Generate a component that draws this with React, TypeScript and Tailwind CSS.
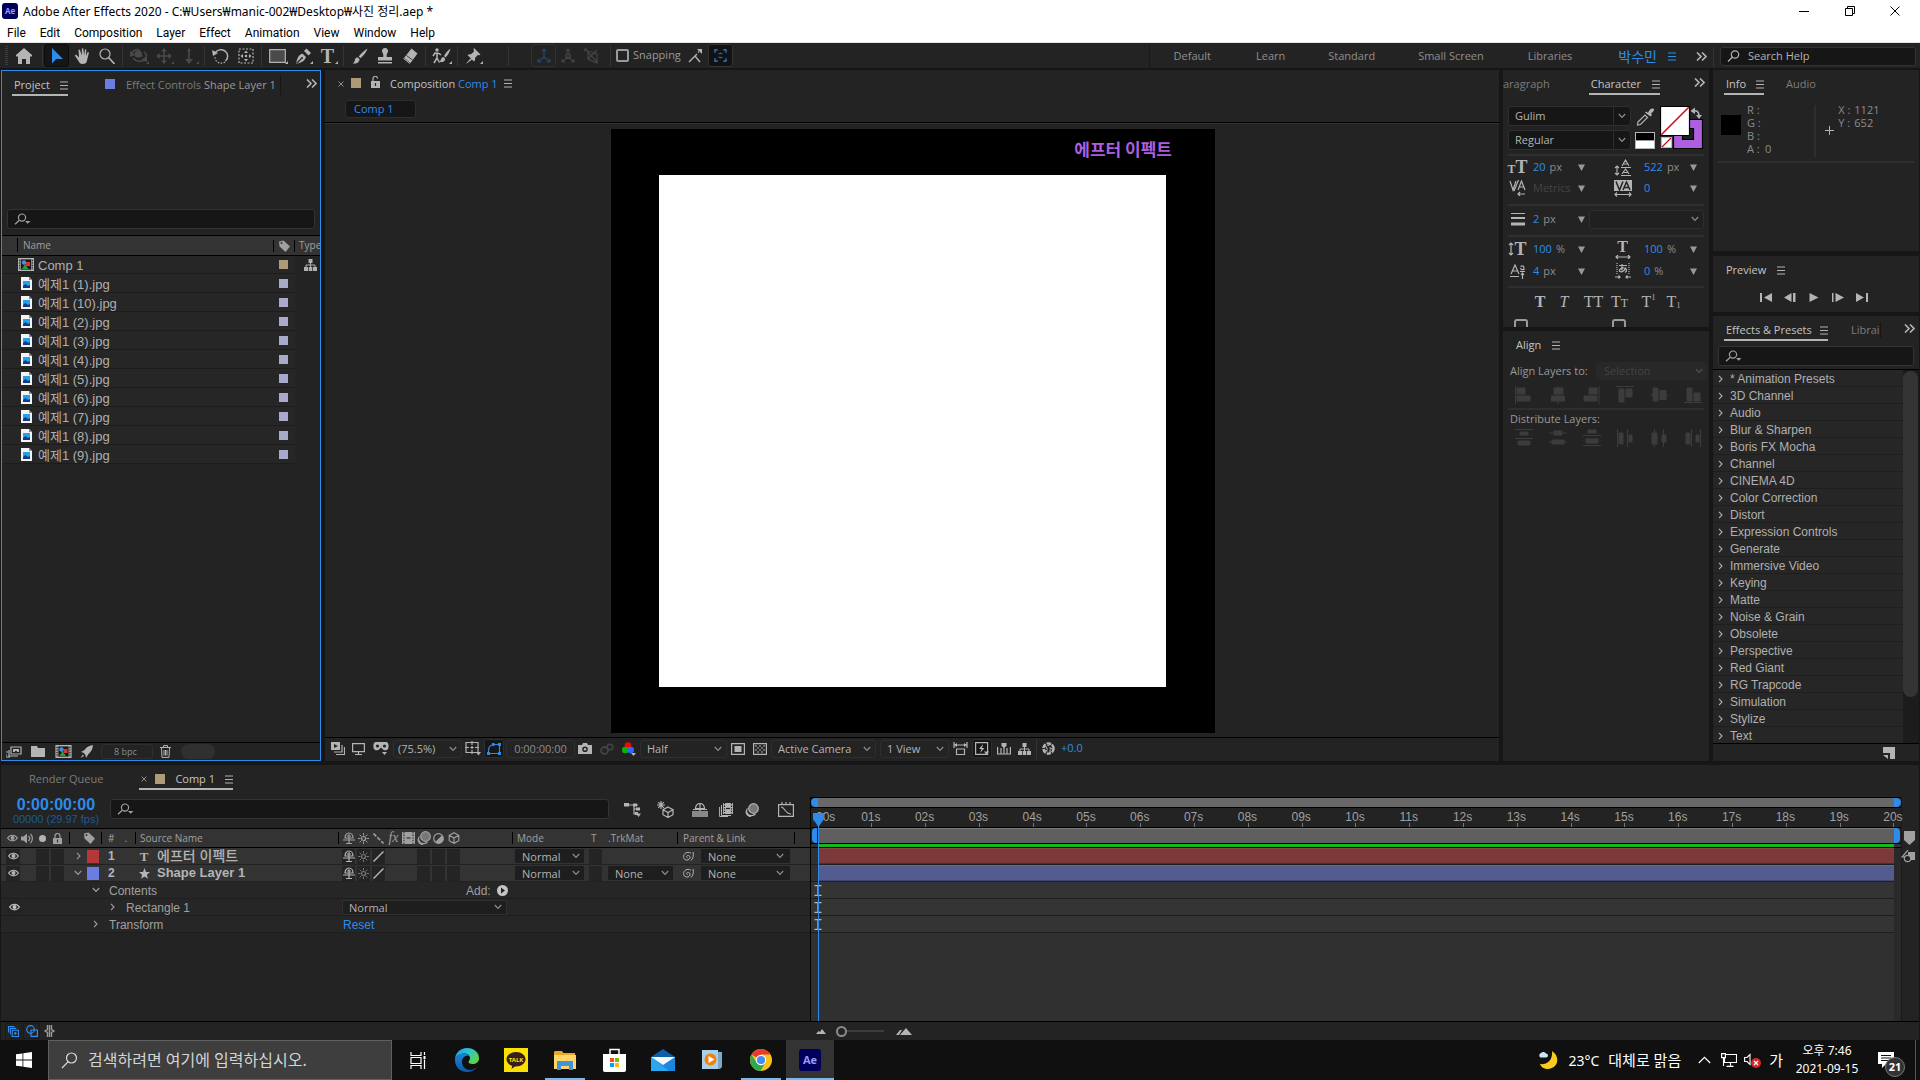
import React, { type ReactNode } from "react";

const UI = "font-['Open_Sans','Noto_Sans_CJK_KR',sans-serif]";
const LIST = "font-['Liberation_Sans','Noto_Sans_CJK_KR',sans-serif]";

type IcoProps = { w?: number; h?: number; vb?: string; className?: string; children: ReactNode };
const Ico = ({ w = 16, h = 16, vb = "0 0 16 16", className = "", children }: IcoProps) => (
  <svg width={w} height={h} viewBox={vb} className={`shrink-0 ${className}`} fill="none" stroke="currentColor" strokeWidth="1.2" aria-hidden="true">
    {children}
  </svg>
);
const solid = { fill: "currentColor", stroke: "none" };

const Btn = ({ label, className = "", children }: { label: string; className?: string; children: ReactNode }) => (
  <button type="button" aria-label={label} className={`flex shrink-0 items-center justify-center ${className}`}>{children}</button>
);

const Ham = ({ className = "text-[#b4b4b4]" }: { className?: string }) => (
  <Btn label="Panel menu" className={className}>
    <Ico w={8} h={9} vb="0 0 8 9"><path d="M0 1h8M0 4.5h8M0 8h8" strokeWidth="1" /></Ico>
  </Btn>
);
const More = () => (
  <Btn label="More" className="text-[#b4b4b4]">
    <Ico w={11} h={9} vb="0 0 11 9"><path d="M1 .5l4 4-4 4M6 .5l4 4-4 4" strokeWidth="1.6" /></Ico>
  </Btn>
);
const Chev = ({ className = "" }: { className?: string }) => (
  <Ico w={8} h={6} vb="0 0 8 6" className={className}><path d="M.8 1L4 4.4 7.2 1" strokeWidth="1.2" /></Ico>
);
const ChevR = () => (
  <Ico w={5} h={8} vb="0 0 5 8"><path d="M1 .8L4 4 1 7.2" strokeWidth="1.1" /></Ico>
);
const Tri = ({ label }: { label: string }) => (
  <Btn label={label} className="text-[#999]"><Ico w={7} h={7} vb="0 0 7 7"><path d="M0 .5h7L3.5 7z" {...solid} /></Ico></Btn>
);
const Lens = () => (
  <Ico w={17} h={12} vb="0 0 17 12" className="text-[#a0a0a0]">
    <circle cx="8" cy="4.6" r="3.6" /><path d="M5.3 7.2L1 11.2" /><path d="M11 8h5.4l-2.7 2.8z" {...solid} />
  </Ico>
);

const Sel = ({ label, value, className = "", sel = "pl-2", chev = "mr-2" }: { label: string; value: string; className?: string; sel?: string; chev?: string }) => (
  <div className={`grid shrink-0 grid-rows-[minmax(0,1fr)] items-center ${className}`}>
    <select aria-label={label} className={`h-full w-full appearance-none bg-transparent [grid-area:1/1] ${sel}`}>
      <option>{value}</option>
    </select>
    <Chev className={`pointer-events-none justify-self-end text-[#8c8c8c] [grid-area:1/1] ${chev}`} />
  </div>
);

const Search = ({ label, className = "" }: { label: string; className?: string }) => (
  <label className={`flex h-5 items-center gap-2 rounded-[3px] border border-[#333] bg-[#161616] px-1.5 ${className}`}>
    <Lens />
    <input aria-label={label} className="min-w-0 flex-1 bg-transparent text-[11px] text-[#b4b4b4] outline-none" />
  </label>
);

const AeLogo = ({ size, className = "" }: { size: string; className?: string }) => (
  <span className={`flex shrink-0 items-center justify-center rounded-[3px] bg-[#00005b] font-['Open_Sans',sans-serif] font-bold text-[#9999ff] ${size} ${className}`}>Ae</span>
);

/* ---------- window title and menus ---------- */
const TitleBar = () => (
  <header className="flex h-[22px] shrink-0 items-center bg-white pr-0.5 pl-0.5 text-black">
    <AeLogo size="size-4 text-[8px]" />
    <h1 className="ml-[5px] flex-1 pt-0.5 font-['Noto_Sans','Noto_Sans_CJK_KR',sans-serif] text-[12px] font-normal">
      Adobe After Effects 2020 - C:₩Users₩manic-002₩Desktop₩사진 정리.aep *
    </h1>
    <Btn label="Minimize" className="w-[46px]"><Ico w={10} h={10} vb="0 0 10 10"><path d="M0 5.5h10" strokeWidth="1" /></Ico></Btn>
    <Btn label="Restore" className="w-[45px]">
      <Ico w={10} h={10} vb="0 0 10 10"><path d="M.5 2.5h7v7h-7zM2.5 2.5v-2h7v7h-2" strokeWidth="1" /></Ico>
    </Btn>
    <Btn label="Close" className="w-[46px]"><Ico w={10} h={10} vb="0 0 10 10"><path d="M.5.5l9 9M9.5.5l-9 9" strokeWidth="1" /></Ico></Btn>
  </header>
);

const MenuBar = () => (
  <nav className="flex h-[21px] shrink-0 items-center gap-[14px] border-b border-[#e4e4e4] bg-white pt-0.5 pl-[7px] font-[Roboto,sans-serif] text-[12px] text-black">
    {["File", "Edit", "Composition", "Layer", "Effect", "Animation", "View", "Window", "Help"].map((m) => (
      <button key={m} type="button">{m}</button>
    ))}
  </nav>
);

/* ---------- tool bar ---------- */
const Sep = ({ w = "w-[7px]" }: { w?: string }) => (
  <span className={`flex h-5 shrink-0 justify-center ${w}`}><span className="w-px bg-[#343434]" /></span>
);
const Tool = ({ label, className = "", w = "w-[25px]", corner = false, children }: { label: string; className?: string; w?: string; corner?: boolean; children: ReactNode }) => (
  <Btn label={label} className={`relative h-[23px] ${w} ${className}`}>
    {children}
    {corner && <Ico w={3} h={3} vb="0 0 3 3" className="absolute right-0.5 bottom-[3px]"><path d="M3 0v3H0z" {...solid} /></Ico>}
  </Btn>
);
const axis = <path d="M8 9V1M6 3l2-2 2 2M8 9l-6 5M8 9l6 5M2 11v3h3M14 11v3h-3" />;

const ToolBar = () => (
  <div className={`flex h-[25px] shrink-0 items-center bg-[#232323] text-[#b4b4b4] ${UI}`}>
    <span className="ml-[5px] h-5 w-[3px] bg-[repeating-linear-gradient(#3c3c3c_0_1px,transparent_1px_2px)]" />
    <Tool label="Home" w="w-8"><Ico w={18} h={16} vb="0 0 18 16"><path d="M9 0L1 7v1.500h2V16h4v-5h4v5h4V8.500h2V7z" {...solid} /></Ico></Tool>
    <Sep w="w-1" />
    <Tool label="Selection" className="rounded-[3px] border border-[#0c0c0c] bg-[#161616] text-[#2d8ceb]">
      <Ico><path d="M3 0v15.500l4.200-4.500L14 11z" {...solid} /></Ico>
    </Tool>
    <Tool label="Hand">
      <Ico><path d="M5 9.500L2 6.500 .8 7.600 4.500 13c.8 1.800 2 3 4 3 3 0 4.500-1.500 4.700-4.500L15 4.500l-1.300-.4-1.600 4L12.300 1.500 11 1.300l-.8 6L9.200.3 7.800.4l.1 7L5.800 1.500l-1.300.5z" {...solid} /></Ico>
    </Tool>
    <Tool label="Zoom"><Ico><circle cx="6" cy="6" r="5" /><path d="M9.500 9.500L15.500 16" strokeWidth="1.600" /></Ico></Tool>
    <Sep />
    <Tool label="Orbit camera" corner className="text-[#4a4a4a]">
      <Ico w={18} vb="0 0 18 16"><path d="M2 5.500C4 .5 9 .5 10.500 4L12 9M3 10c3 4 9 4 12 1.500M14 4c3 2 3 5 1 7" strokeWidth="1.400" /><circle cx="8" cy="6" r="3.600" {...solid} /><path d="M0 3l5 4-5 2zM11 12l6-4v6z" {...solid} /></Ico>
    </Tool>
    <Tool label="Pan camera" corner className="text-[#4a4a4a]">
      <Ico><path d="M8 2v12M2 8h12" strokeWidth="1.600" /><path d="M8 0l3 3.500H5zM8 16l3-3.500H5zM0 8l3.500-3v6zM16 8l-3.500-3v6z" {...solid} /></Ico>
    </Tool>
    <Tool label="Dolly camera" corner className="text-[#4a4a4a]">
      <Ico><path d="M8 2v10" strokeWidth="1.600" /><path d="M8 0l2 3H6zM8 16l4-5H4z" {...solid} /></Ico>
    </Tool>
    <Sep />
    <Tool label="Rotation">
      <Ico w={18} vb="0 0 18 16"><path d="M3 5C5 1.500 9.500.8 13 3c3.600 2.600 3.400 7.600.5 10" strokeWidth="1.500" /><path d="M0 2l1 6 5-3z" {...solid} /><path d="M13 14c-3 2-7 1.500-9-1.500-.8-1-1-2.500-1-3.500" strokeDasharray="1.500 1.500" /></Ico>
    </Tool>
    <Tool label="Pan behind">
      <Ico><path d="M1 1h14v14H1z" strokeDasharray="2 1.500" /><path d="M8 2.500l2 2.500H6zM8 13.500l2-2.500H6zM2.500 8L5 6v4zM13.500 8L11 6v4z" {...solid} /><circle cx="8" cy="8" r="1.200" {...solid} /></Ico>
    </Tool>
    <Sep />
    <Tool label="Rectangle" corner><Ico w={17} h={14} vb="0 0 17 14"><path d="M.7.7h15.600v12.600H.7z" fill="#4a4a4a" /></Ico></Tool>
    <Tool label="Pen" corner>
      <Ico><path d="M1 16C2 11 3 7 7.500 5.500l3.500 3.500C9.500 13.500 6 14.500 1 16z" {...solid} /><path d="M9 3l2.500-2.500L16 5l-2.500 2.500z" {...solid} /><path d="M1.500 15.500l5-5" stroke="#232323" /><circle cx="7" cy="10" r="1" fill="#232323" stroke="none" /></Ico>
    </Tool>
    <Tool label="Type" corner><span className="font-['Liberation_Serif',serif] text-[20px] leading-none font-bold">T</span></Tool>
    <Sep />
    <Tool label="Brush"><Ico><path d="M15.500.5C12 2.500 9 5.500 6.800 8.500l1.700 1.700C11.500 7.500 14.500 4 15.500.5zM6 9.500c-2.500-.5-3 1.500-3.200 3C2.500 14 1.500 15 .5 15.500c3 .5 7-.5 7-4.300z" {...solid} /></Ico></Tool>
    <Tool label="Clone stamp"><Ico><path d="M8 0a3 3 0 0 1 2.600 4.500C9.500 6 9.600 7.500 9.800 9H15v3.500H1V9h5.200c.2-1.500.3-3-.8-4.500A3 3 0 0 1 8 0zM1 14h14v1.500H1z" {...solid} /></Ico></Tool>
    <Tool label="Eraser"><Ico><path d="M9.500.5l6 5-7 9.500-6.500-5z" {...solid} /><path d="M1.500 10.500l6.500 5" strokeWidth="1" /><path d="M4.500 7.500l6 4.500" stroke="#232323" strokeWidth=".8" /></Ico></Tool>
    <Sep />
    <Tool label="Roto brush" corner>
      <Ico w={19} vb="0 0 19 16"><circle cx="5" cy="2" r="1.700" {...solid} /><path d="M1 8l2-3 4 .5L9 7M5 5v5l-3 5M5 10l2.500 4.500" strokeWidth="1.500" /><path d="M18.500.5c-3 2-5 5-6.500 7.500l1.500 1.500c2.500-2.500 4.500-6 5-9zM11.500 9c-2.500 0-2.500 3.500-4 5 3 .5 6-.5 5.500-3.500z" {...solid} /></Ico>
    </Tool>
    <Sep w="w-1.5" />
    <Tool label="Puppet pin" corner><Ico><path d="M9 0l6.500 6.500-1.200.8-1.500-.3-2.800 3c.3 1.500 0 2.700-1 3.500L2.500 7c1-.8 2-1 3.500-.8l3-2.700L8.500 1zM5.500 10.500L1 15.500l1-.2 5-3.800z" {...solid} /></Ico></Tool>
    <Sep w="w-[46px]" />
    <Tool label="Local axis" className="rounded-[3px] border border-[#303030] text-[#23496e]"><Ico>{axis}</Ico></Tool>
    <Tool label="World axis" w="w-6" className="text-[#444]"><Ico>{axis}<circle cx="8" cy="8" r="2.500" /></Ico></Tool>
    <Tool label="View axis" w="w-6" className="text-[#444]"><Ico><path d="M4 3v8l9 4V6zM1 1l12 13M13 2L4 11M0 4V1h3" /></Ico></Tool>
    <Sep w="w-3" />
    <label className="flex shrink-0 items-center gap-1 text-[11px] text-[#9a9a9a]">
      <input type="checkbox" className="size-[13px] appearance-none rounded-[2px] border-2 border-[#9a9a9a]" />
      Snapping
    </label>
    <Tool label="Snap to edges" className="ml-0.5"><Ico><path d="M2 14l6-6 5 6M8 8l2-2M11 4.500l1-1" strokeWidth="1.400" /><path d="M10 1h5v5z" {...solid} /></Ico></Tool>
    <Tool label="Snap to features" className="rounded-[3px] border border-[#333] bg-[#121212] text-[#2d8ceb]">
      <Ico w={13} h={13} vb="0 0 14 14"><path d="M1 4V1h3M10 1h3v3M13 10v3h-3M4 13H1v-3M5 5h1M8 5h1M5 9h1M8 9h1M7 4v1M7 9v1" /></Ico>
    </Tool>
    <span className="flex-1" />
    <nav className="flex shrink-0 items-center pt-0.5 text-[11px] text-[#8f8f8f]">
      <span className="mr-6 h-[23px] w-px bg-[#191919]" />
      <button type="button" className="mr-[45px]">Default</button>
      <button type="button" className="mr-[43px]">Learn</button>
      <button type="button" className="mr-[43px]">Standard</button>
      <button type="button" className="mr-[44px]">Small Screen</button>
      <button type="button" className="mr-[46px]">Libraries</button>
      <button type="button" className="mr-[11px] text-[14px] leading-5 text-[#2d8ceb]">박수민</button>
      <Ham className="mr-5 text-[#2d8ceb]" />
      <More />
      <Sep w="w-[13px]" />
    </nav>
    <label className="mt-px mr-1 flex h-[19px] w-[196px] shrink-0 items-center gap-2 rounded-[3px] border border-[#333] bg-[#161616] pl-1.5">
      <Ico w={13} h={12} vb="0 0 13 12"><circle cx="8" cy="4.500" r="3.700" /><path d="M5.500 7L1 11.500" /></Ico>
      <input aria-label="Search Help" placeholder="Search Help" className="min-w-0 flex-1 bg-transparent text-[11px] outline-none placeholder:text-[#b4b4b4]" />
    </label>
  </div>
);

/* ---------- project panel ---------- */
const Tab = ({ children, className = "" }: { children: ReactNode; className?: string }) => (
  <div className={`mt-1.5 flex h-[19px] items-center border-b-2 border-[#b4b4b4] pb-px pl-0.5 text-[#c4c4c4] ${className}`}>{children}</div>
);
const TabRow = ({ children, className = "" }: { children: ReactNode; className?: string }) => (
  <div className={`flex h-[30px] shrink-0 items-start text-[11px] ${className}`}>{children}</div>
);
const Off = ({ children, className = "" }: { children: ReactNode; className?: string }) => (
  <button type="button" className={`mt-1.5 h-4 shrink-0 leading-4 text-[#7c7c7c] ${className}`}>{children}</button>
);

const CompIcon = ({ w = 16 }: { w?: number }) => (
  <Ico w={w} h={13} vb="0 0 16 13"><path d="M.5.5h15v12H.5z" fill="#8c8c8c" stroke="#b4b4b4" /><path d="M3 1.500h10v10H3z" fill="#1a1a1a" stroke="none" /><path d="M1.500 2v9M14.500 2v9" stroke="#222" strokeDasharray="1 1.500" /><circle cx="6" cy="4.500" r="2.200" fill="#4a90e2" stroke="none" /><path d="M8 4h4v4H8z" fill="#d33" stroke="none" /><path d="M4 11l3-5 3.500 5z" fill="#23a03a" stroke="none" /></Ico>
);
const JpgIcon = () => (
  <Ico w={11} h={13} vb="0 0 11 13"><path d="M0 0h8l3 3v10H0z" fill="#f4f4f4" stroke="none" /><path d="M8 0v3h3z" fill="#888" stroke="none" /><path d="M2 4h7v7H2z" fill="#1fa2f0" stroke="none" /><path d="M2 9l2.500-2L7 9l2-1v3H2z" fill="#123a8a" stroke="none" /></Ico>
);
const Tag = () => (
  <Ico w={13} h={12} vb="0 0 13 12"><path d="M1 1.500L5.500.5 12 6.500 7.500 12 1.500 6.500z" {...solid} /><circle cx="3.500" cy="3" r="1" fill="#333" stroke="none" /></Ico>
);
const FlowIcon = ({ className = "" }: { className?: string }) => (
  <Ico w={13} h={12} vb="0 0 13 12" className={className}><path d="M4.500 0h4v4h-4zM0 8h4v4H0zM9 8h4v4H9zM4.700 8h3.600v4H4.700z" {...solid} /><path d="M6.500 4v4M2 8V6h9v2" strokeWidth="1" /></Ico>
);

const files = ["Comp 1", "예제1 (1).jpg", "예제1 (10).jpg", "예제1 (2).jpg", "예제1 (3).jpg", "예제1 (4).jpg", "예제1 (5).jpg", "예제1 (6).jpg", "예제1 (7).jpg", "예제1 (8).jpg", "예제1 (9).jpg"];

const ProjectPanel = () => (
  <section className="flex w-[320px] shrink-0 flex-col border border-[#2d8ceb] bg-[#232323]">
    <TabRow className="pl-2.5">
      <Tab className="w-14 justify-between">Project<Ham /></Tab>
      <span className="mt-2 ml-[37px] size-2.5 bg-[#6b7de0]" />
      <Off className="ml-[11px]">Effect Controls <span className="text-[#9a9a9a]">Shape Layer 1</span></Off>
      <span className="mt-1 ml-1 h-5 w-px bg-[#161616]" />
      <span className="mt-2 mr-[3px] ml-auto"><More /></span>
    </TabRow>
    <div className="h-[108px] shrink-0" />
    <Search label="Search project" className="mx-[5px] shrink-0" />
    <div className="mt-1.5 min-h-0 flex-1 overflow-hidden">
      <table className="w-full table-fixed border-collapse text-left">
        <thead>
          <tr className={`h-5 border-y border-black bg-[#333] text-[10px] text-[#a0a0a0] ${UI}`}>
            <th scope="col" className="pl-[15px] font-normal"><span className="border-l border-black pl-[5px]">Name</span></th>
            <th scope="col" aria-label="Label" className="w-[22px]"><span className="flex h-3 items-center border-x border-black pl-1"><Tag /></span></th>
            <th scope="col" className="w-[25px] pl-1 font-normal">Type</th>
          </tr>
        </thead>
        <tbody>
          {files.map((f, i) => (
            <tr key={f} className={`text-[13px] text-[#b0b0b0] ${LIST}`}>
              <td className="border-b border-[#1c1c1c] bg-[#262626] py-0 pl-4">
                <span className={i === 0 ? "flex h-[17px] items-center leading-none" : "flex h-[18px] items-center leading-none"}>
                  <span className="flex w-5 items-center">{i === 0 ? <CompIcon /> : <span className="ml-[3px]"><JpgIcon /></span>}</span>
                  <span className="pt-0.5">{f}</span>
                </span>
              </td>
              <td className="border-b border-[#1c1c1c] bg-[#262626] p-0 pl-1.5"><span className={i === 0 ? "block size-[9px] bg-[#ad9a78]" : "block size-[9px] bg-[#a9a9cc]"} /></td>
              <td className="p-0 pl-[9px]">{i === 0 && <FlowIcon />}</td>
            </tr>
          ))}
        </tbody>
      </table>
    </div>
    <div className="flex h-[18px] shrink-0 items-center border-t border-black pl-[3px] text-[#b4b4b4]">
      <Btn label="Interpret footage"><Ico w={17} h={12} vb="0 0 17 12"><path d="M6 1h10v7H6zM4 4v6h9M1 6h2M1 9h1M1 11h4M8 5.500h2M12 5.500h2" /><path d="M8 3h6v2H8z" {...solid} /></Ico></Btn>
      <Btn label="New folder" className="ml-[9px]"><Ico w={14} h={11} vb="0 0 14 11"><path d="M0 0h6l1 2h7v9H0z" {...solid} /></Ico></Btn>
      <Btn label="New composition" className="ml-2.5"><CompIcon w={17} /></Btn>
      <Btn label="Project settings" className="ml-2"><Ico w={13} h={13} vb="0 0 13 13"><path d="M13 0C9 .5 6 2.500 4.500 5L1 7l2.500.8L5.500 10l.5 3 2.500-4C11 7 12.800 4 13 0zM3 9.500L.5 13 4 11z" {...solid} /></Ico></Btn>
      <button type="button" className={`ml-2 h-[15px] w-[52px] rounded-[3px] border border-[#2e2e2e] pl-3 text-left text-[9px] leading-none text-[#8c8c8c] ${UI}`}>8 bpc</button>
      <Btn label="Delete" className="ml-[7px]"><Ico w={11} h={13} vb="0 0 11 13"><path d="M0 2.500h11M3.500 2V.6h4V2M1.500 3l.5 9.400h7L9.500 3M4 5v5.500M5.500 5v5.500M7 5v5.500" strokeWidth="1" /></Ico></Btn>
      <span className="ml-2.5 h-[15px] w-[34px] rounded-full bg-[#303030]" />
    </div>
  </section>
);

/* ---------- composition viewer ---------- */
const box = "rounded-[3px] border border-[#2e2e2e]";
const CompPanel = () => (
  <section className="ml-1 flex min-w-0 flex-1 flex-col bg-[#232323]">
    <TabRow className="pl-[13px] text-[#c4c4c4]">
      <Btn label="Close tab" className="mt-[11px] text-[#8c8c8c]"><Ico w={6} h={6} vb="0 0 6 6"><path d="M.5.5l5 5M5.500.5l-5 5" strokeWidth="1" /></Ico></Btn>
      <span className="mt-2 ml-[7px] size-2.5 bg-[#ad9a78]" />
      <Btn label="Lock" className="mt-1.5 ml-2.5 text-[#b4b4b4]"><Ico w={9} h={12} vb="0 0 9 12"><path d="M0 5h9v7H0z" {...solid} /><path d="M2 5V2.500a2 2 0 0 1 4.500 0" /><path d="M4.500 7v3" stroke="#232323" /></Ico></Btn>
      <span className="mt-1.5 ml-2.5 leading-4">Composition <span className="text-[#2d8ceb]">Comp 1</span></span>
      <span className="mt-[9px] ml-1.5"><Ham /></span>
    </TabRow>
    <div className="flex h-[22px] shrink-0 items-start pl-5 text-[11px]">
      <button type="button" className="h-[18px] w-[71px] rounded-[3px] border border-[#2e2e2e] bg-[#161616] pl-2 text-left leading-4 text-[#2d8ceb]">Comp 1</button>
    </div>
    <div className="flex min-h-0 flex-1 items-center justify-center border-t border-black pt-0.5 pl-0.5 shadow-[inset_0_1px_0_#333]">
      <div className="relative flex h-[604px] w-[604px] items-center justify-center bg-black">
        <div className="mr-px h-[512px] w-[507px] bg-white" />
        <span className="absolute top-2 right-[43px] font-['Noto_Sans_CJK_KR',sans-serif] text-[17px] leading-6 font-bold text-[#ad5fe0]">에프터 이펙트</span>
      </div>
    </div>
    <div className="flex h-6 shrink-0 items-center border-t border-black pb-0.5 pl-1.5 text-[11px] text-[#b4b4b4]">
      <Btn label="Always preview"><Ico w={14} h={13} vb="0 0 14 13"><path d="M0 0h9v8H0z" {...solid} /><path d="M3 2l4 2-4 2z" fill="#232323" stroke="none" /><path d="M11 3v7H3M13.500 5v7.500H5" /></Ico></Btn>
      <Btn label="Primary viewer" className="ml-[7px]"><Ico w={13} h={12} vb="0 0 13 12"><path d="M.6.6h11.800v8H.6zM6.500 9v2.500M3 11.500h7" /></Ico></Btn>
      <Btn label="3D goggles" className="ml-2"><Ico w={16} h={13} vb="0 0 16 13"><path d="M3 0h10c3 0 3 5 2 7-1 1.500-4 2-5.500 0L8 5.500 6.500 7C5 9 2 8.500 1 7 0 5 0 0 3 0z" {...solid} /><circle cx="4.500" cy="4" r="1.600" fill="#232323" stroke="none" /><circle cx="11.500" cy="4" r="1.600" fill="#232323" stroke="none" /><path d="M9 10h5l-2.500 3z" {...solid} /></Ico></Btn>
      <Sel label="Magnification" value="(75.5%)" className={`ml-1 h-[18px] w-[69px] ${box}`} sel="pl-1" chev="mr-1" />
      <Btn label="Grid options" className="ml-[3px]"><Ico w={16} h={15} vb="0 0 16 15"><path d="M1 1.500h12v10H1zM7 0v4M7 9v4M0 6.500h4M10 6.500h4M5.500 6.500h3M7 5v3" /><path d="M11 11h5l-2.500 3.500z" {...solid} /></Ico></Btn>
      <Btn label="Mask visibility" className="ml-[3px] h-[19px] w-5 rounded-[3px] border border-[#2e2e2e] bg-[#161616] text-[#2d8ceb]"><Ico w={14} h={12} vb="0 0 14 12"><path d="M1.500 10.500V7C1.500 4 4 1.500 7 1.500h5.500v9z" /><path d="M0 9h3v3H0zM11 9h3v3h-3zM11 0h3v3h-3zM5 0h2.500v3H5z" {...solid} /></Ico></Btn>
      <button type="button" className={`ml-0.5 h-[18px] w-[69px] leading-none text-[#8c8c8c] ${box}`}>0:00:00:00</button>
      <Btn label="Take snapshot" className="ml-[3px]"><Ico w={14} h={11} vb="0 0 14 11"><path d="M0 2h4l1-2h4l1 2h4v9H0z" {...solid} /><circle cx="7" cy="6.200" r="2.800" fill="#232323" stroke="none" /><circle cx="7" cy="6.200" r="1.200" {...solid} /></Ico></Btn>
      <Btn label="Show snapshot" className="ml-2 text-[#444]"><Ico w={14} h={12} vb="0 0 14 12"><circle cx="4.500" cy="7.500" r="3.500" strokeWidth="1.800" /><circle cx="10" cy="4" r="2.800" strokeWidth="1.600" /></Ico></Btn>
      <Btn label="Show channel" className="ml-2"><Ico w={15} h={14} vb="0 0 15 14"><circle cx="6" cy="3.500" r="3.300" fill="#f00" stroke="none" /><circle cx="3.300" cy="8" r="3.300" fill="#0b0" stroke="none" /><circle cx="8.700" cy="8" r="3.300" fill="#36f" stroke="none" /><path d="M9 11h5l-2.500 3z" {...solid} /></Ico></Btn>
      <Sel label="Resolution" value="Half" className={`ml-[3px] h-[18px] w-[87px] ${box}`} sel="pl-1.5" chev="mr-1" />
      <Btn label="Region of interest" className="ml-1"><Ico w={14} h={12} vb="0 0 14 12"><path d="M.6.6h12.800v10.800H.6z" /><path d="M3.500 3h7v6h-7z" {...solid} /></Ico></Btn>
      <Btn label="Transparency grid" className="ml-2"><Ico w={14} h={12} vb="0 0 14 12"><path d="M.6.6h12.800v10.800H.6zM2 3h2M6 3h2M10 3h2M4 5h2M8 5h2M2 7h2M6 7h2M10 7h2M4 9h2M8 9h2" /></Ico></Btn>
      <Sel label="3D view" value="Active Camera" className={`ml-1 h-[18px] w-[105px] ${box}`} sel="pl-1.5" chev="mr-1" />
      <Sel label="View layout" value="1 View" className={`ml-1 h-[18px] w-[69px] ${box}`} sel="pl-1.5" chev="mr-1" />
      <Btn label="Pixel aspect" className="ml-1"><Ico w={15} h={13} vb="0 0 15 13"><path d="M1 3h13M3.500 7h8v5.500h-8zM1 0v6M14 0v6" /><path d="M1 3l3-2v4zM14 3l-3-2v4z" {...solid} /></Ico></Btn>
      <Btn label="Fast previews" className="ml-1 h-[19px] w-5 rounded-[3px] border border-[#2e2e2e] bg-[#161616]"><Ico w={14} h={13} vb="0 0 14 13"><path d="M.6.6h12v11.800H.6z" /><path d="M8 2L4 7h2.500L5 11l4.500-5H7zM9 9.500h5L11.500 13z" {...solid} /></Ico></Btn>
      <Btn label="Timeline" className="ml-[5px]"><Ico w={14} h={12} vb="0 0 14 12"><path d="M.6 4v7h12.800V4M4 8v3M7 3v8M10 8v3M4 8V5M10 8V5" /><path d="M4.500 0h5v3L7 5 4.500 3z" {...solid} /></Ico></Btn>
      <Btn label="Flowchart" className="ml-[7px]"><FlowIcon /></Btn>
      <Sep w="w-[11px]" />
      <Btn label="Reset exposure"><Ico w={13} h={13} vb="0 0 14 14"><circle cx="7" cy="7" r="5.500" strokeWidth="2.600" strokeDasharray="4.600 1.200" /><path d="M3 3l3 5M10 2L6 4M12 8L8 6M8 13l1-5M2 8l4 2" strokeWidth="1.200" /></Ico></Btn>
      <button type="button" className="ml-1.5 text-[#2d8ceb]">+0.0</button>
    </div>
  </section>
);

/* ---------- character and align ---------- */
const serif = "font-['Liberation_Serif',serif] leading-none";
const CharCell = ({ icon, value, unit = "", off = false, label, gap = "ml-1.5" }: { icon: ReactNode; value: string; unit?: string; off?: boolean; label: string; gap?: string }) => (
  <div className="flex h-5 items-center text-[11px]">
    <span className="flex w-[19px] shrink-0 items-center justify-center text-[#b4b4b4]">{icon}</span>
    <button type="button" aria-label={label} className={`${gap} ${off ? "text-[#444]" : "text-[#2d8ceb]"}`}>{value}</button>
    <span className="ml-1 flex-1 text-[#8c8c8c]">{unit}</span>
    <Tri label={`${label} presets`} />
  </div>
);
const Rule = () => <hr className="mx-[5px] border-t-2 border-[#2e2e2e]" />;
const charGrid = "grid grid-cols-[77px_1fr] gap-x-7 px-[5px] pr-3";
const fieldBox = "h-5 w-[123px] rounded-[3px] border border-[#2e2e2e] bg-[#161616]";
const fieldChev = "mr-1 box-content border-l border-[#2e2e2e] pl-1 py-1.5";

const CharacterPanel = () => (
  <section className="flex h-[257px] shrink-0 flex-col overflow-hidden bg-[#232323]">
    <TabRow className="pr-1">
      <Off>aragraph</Off>
      <Tab className="ml-[39px] w-[71px] justify-between">Character<Ham /></Tab>
      <span className="mt-2 ml-auto"><More /></span>
    </TabRow>
    <div className="mt-1.5 flex gap-1 pl-[5px] text-[11px] text-[#b4b4b4]">
      <div className="flex flex-col gap-1">
        <Sel label="Font family" value="Gulim" className={fieldBox} sel="pl-1.5" chev={fieldChev} />
        <Sel label="Font style" value="Regular" className={fieldBox} sel="pl-1.5" chev={fieldChev} />
      </div>
      <div className="flex flex-col items-center justify-between pt-0.5 pb-px">
        <Btn label="Eyedropper"><Ico w={18} h={18} vb="0 0 18 18"><path d="M2 14l7-7 2.500 2.500-7 7L1.500 17z" /><path d="M9 4.500l1.500-1L12 5c1-3 3-5 5-4.500s1 3-2 5l1 1.500-1.500 1.500z" {...solid} /></Ico></Btn>
        <Btn label="Black or white"><span className="flex h-[17px] w-5 flex-col border border-[#b4b4b4]"><span className="h-[7px] bg-black" /><span className="h-px bg-[#999]" /><span className="flex-1 bg-white" /></span></Btn>
      </div>
      <Ico w={43} h={44} vb="0 0 43 44" className="ml-px">
        <path d="M13.500 13.500h29v29h-29z" fill="#ad5fe0" stroke="#000" /><path d="M22.500 22.500h11v11h-11z" fill="#1e1e1e" stroke="#000" />
        <path d="M.5.5h29v29H.5z" fill="#fff" stroke="#000" /><path d="M1 29L29 1" stroke="#c8101a" strokeWidth="1.600" />
        <path d="M1.500 31.500h10v10h-10z" fill="#fff" stroke="#bbb" /><path d="M2 41l9-9" stroke="#c8101a" />
        <path d="M33 5c4-1 6 1 6 5" strokeWidth="1.600" /><path d="M30.500 5L35 1.500V8zM36 9h6l-3 4z" {...solid} />
      </Ico>
    </div>
    <div className="mt-1"><Rule /></div>
    <div className={`mt-px ${charGrid}`}>
      <CharCell label="Font size" value="20" unit="px" icon={<span className={`font-bold ${serif}`}><span className="text-[12px]">T</span><span className="text-[18px]">T</span></span>} />
      <CharCell label="Leading" value="522" unit="px" gap="ml-3" icon={<Ico w={17} h={17} vb="0 0 17 17"><path d="M3 7v9M1 9l2-2 2 2M1 14l2 2 2-2M7 8.500h10M7 16.500h10M8 7l3.500-6L15 7M9.500 5h4M8 15l3.500-5 3.500 5M9.500 13.500h4" strokeWidth="1.100" /></Ico>} />
    </div>
    <div className={`mt-px ${charGrid}`}>
      <CharCell label="Kerning" value="Metrics" off icon={<Ico w={17} h={16} vb="0 0 17 16"><path d="M1 1l3 9 3-9M5 11L9.500 0M9 10l3.500-9L16 10M10.500 7h4M9 14h7M11 12l-2 2 2 2" /></Ico>} />
      <CharCell label="Tracking" value="0" gap="ml-3" icon={<Ico w={18} h={17} vb="0 0 18 17"><path d="M0 0h18v11H0z" {...solid} /><path d="M2 1.500L5.500 10 9 1.500M9 10l3.500-8L16 10M10.500 7.500h4" stroke="#232323" strokeWidth="1.500" /><path d="M1 14.500h16M3 12.500l-2 2 2 2M15 12.500l2 2-2 2" /></Ico>} />
    </div>
    <div className="mt-1.5"><Rule /></div>
    <div className="mt-[3px] flex items-center pl-[5px]">
      <div className="w-[77px]"><CharCell label="Stroke width" value="2" unit="px" icon={<Ico w={14} h={13} vb="0 0 14 13"><path d="M0 .5h14" strokeWidth="1" /><path d="M0 5h14" strokeWidth="2" /><path d="M0 11h14" strokeWidth="3" /></Ico>} /></div>
      <Sel label="Stroke order" value="" className="ml-1 h-[19px] w-[115px] rounded-[3px] border border-[#2e2e2e] bg-[#202020]" chev="mr-1" />
    </div>
    <div className="mt-1.5"><Rule /></div>
    <div className={`mt-0.5 ${charGrid}`}>
      <CharCell label="Vertical scale" value="100" unit="%" icon={<><Ico w={6} h={14} vb="0 0 6 14"><path d="M3 1v12M1 3l2-2 2 2M1 11l2 2 2-2" /></Ico><span className={`text-[18px] font-bold ${serif}`}>T</span></>} />
      <CharCell label="Horizontal scale" value="100" unit="%" gap="ml-3" icon={<span className="flex flex-col items-center"><span className={`text-[16px] font-bold ${serif}`}>T</span><Ico w={16} h={4} vb="0 0 16 4"><path d="M1 2h14M3 0L1 2l2 2M13 0l2 2-2 2" /></Ico></span>} />
    </div>
    <div className={`mt-0.5 ${charGrid}`}>
      <CharCell label="Baseline shift" value="4" unit="px" icon={<Ico w={16} h={15} vb="0 0 16 15"><path d="M1 10l4-9 4 9M2.500 7h5M0 12.500h9M10 7.500h5M10.500 2.500c3-1.500 3.500 0 3.500 3-2 .5-4 0-3-1.500M12.500 9v6M11 11l1.500-2 1.500 2" /></Ico>} />
      <CharCell label="Tsume" value="0" unit="%" gap="ml-3" icon={<Ico w={16} h={16} vb="0 0 16 16"><path d="M2 0v11M14 0v11" strokeDasharray="1 1" /><path d="M4 2.500h8M7 1v6.500M11 4.500c-1 3-4 5-6 4s1-4 4-3.500 3.500 3 1 4.500M0 14h5M3.500 12.500l1.500 1.500-1.500 1.500M16 14h-5M12.500 12.500L11 14l1.500 1.500" /></Ico>} />
    </div>
    <div className="mt-[5px]"><Rule /></div>
    <div className={`mt-1.5 flex h-5 items-center pl-[25px] text-[16px] text-[#b4b4b4] ${serif}`}>
      <button type="button" aria-label="Faux bold" className="w-6 font-bold">T</button>
      <button type="button" aria-label="Faux italic" className="w-6 italic">T</button>
      <button type="button" aria-label="All caps" className="ml-1 w-[27px]">TT</button>
      <button type="button" aria-label="Small caps" className="w-[25px]">T<span className="text-[12px]">T</span></button>
      <button type="button" aria-label="Superscript" className="ml-1 flex w-[25px] items-start justify-center">T<span className="text-[8px]">1</span></button>
      <button type="button" aria-label="Subscript" className="flex w-[25px] items-end justify-center">T<span className="text-[8px]">1</span></button>
    </div>
    <div className="mt-[9px] flex gap-[84px] pl-[11px]">
      <input type="checkbox" aria-label="Ligatures" className="size-3.5 shrink-0 appearance-none rounded-[3px] border-2 border-[#9a9a9a]" />
      <input type="checkbox" aria-label="Hindi digits" className="size-3.5 shrink-0 appearance-none rounded-[3px] border-2 border-[#9a9a9a]" />
    </div>
  </section>
);

const alignPaths = [
  "M.5 0v18M2 2h8v6H2zM2 10h13v5H2z",
  "M9 0v18M5 2h9v6H5zM2.500 10h13v5h-13z",
  "M16 0v18M6 2h8v6H6zM1 10h13v5H1z",
  "M0 .5h18M3 3h5v13H3zM10 3h6v8h-6z",
  "M0 9h18M3 2h5v13H3zM10 4.500h6v9h-6z",
  "M0 16.500h18M3 2h5v13H3zM10 7h6v8h-6z",
];
const distPaths = [
  "M0 .5h18M5 3h8v3H5zM0 9.500h18M3 12h12v4H3z",
  "M0 4h18M5 2h8v4H5zM0 13h18M3 11h12v4H3z",
  "M0 6.500h18M5 1h8v3H5zM0 16.500h18M3 10h12v4H3z",
  "M1.500 0v18M3 4h4v11H3zM11.500 0v18M13 6h3v7h-3z",
  "M4.500 0v18M2 4h5v11H2zM13.500 0v18M12 6h4v7h-4z",
  "M7.500 0v18M2 4h4v11H2zM16.500 0v18M12 6h3v7h-3z",
];
const IconStrip = ({ paths, name }: { paths: string[]; name: string }) => (
  <div className="flex justify-between pr-[7px] pl-3 text-[#3c3c3c]">
    {paths.map((d, i) => (
      <Btn key={d} label={`${name} ${i + 1}`}><Ico w={18} h={18} vb="0 0 18 18"><path d={d} fill="currentColor" strokeWidth="1" /></Ico></Btn>
    ))}
  </div>
);

const AlignPanel = () => (
  <section className="mt-1 min-h-0 flex-1 bg-[#232323] text-[11px] text-[#999]">
    <div className="flex h-7 items-center gap-[11px] pl-[13px] text-[#c4c4c4]">Align<Ham /></div>
    <div className="mt-[3px] flex items-center justify-between pr-0.5 pl-[7px]">
      Align Layers to:
      <Sel label="Align layers to" value="Selection" className="h-[18px] w-[111px] rounded-[3px] bg-[#282828] text-[#444]" chev="mr-1 opacity-40" />
    </div>
    <div className="mt-1.5"><IconStrip paths={alignPaths} name="Align" /></div>
    <div className="mt-1"><Rule /></div>
    <p className="pl-[7px] leading-[18px]">Distribute Layers:</p>
    <div className="mt-px"><IconStrip paths={distPaths} name="Distribute" /></div>
  </section>
);

/* ---------- info, preview, effects ---------- */
const InfoPanel = () => (
  <section className="h-[181px] shrink-0 bg-[#232323] text-[11px] text-[#8c8c8c]">
    <TabRow className="pl-[11px]">
      <Tab className="w-10 justify-between">Info<Ham /></Tab>
      <Off className="ml-[22px]">Audio</Off>
    </TabRow>
    <div className="mt-[3px] flex h-[54px] pl-2">
      <span className="mt-3 size-5 bg-black" />
      <dl className="ml-1.5 grid h-min grid-cols-[18px_1fr] leading-[13px]">
        <dt>R :</dt><dd /><dt>G :</dt><dd /><dt>B :</dt><dd /><dt>A :</dt><dd>0</dd>
      </dl>
      <span className="mt-0.5 ml-[43px] w-0.5 bg-[#2e2e2e]" />
      <Ico w={9} h={9} vb="0 0 9 9" className="mt-[23px] ml-[9px] text-[#b4b4b4]"><path d="M4.500 0v9M0 4.500h9" strokeWidth="1" /></Ico>
      <dl className="ml-1 grid h-min grid-cols-[16px_1fr] leading-[13px]">
        <dt>X :</dt><dd>1121</dd><dt>Y :</dt><dd>652</dd>
      </dl>
    </div>
    <div className="mt-1"><Rule /></div>
  </section>
);

const previewPaths = [
  ["First frame", "M0 0h2v9H0zM12 0v9L4 4.500z"],
  ["Previous frame", "M7.500 0v9L0 4.500zM9 0h2.500v9H9z"],
  ["Play", "M1.500 0v9l9-4.500z"],
  ["Next frame", "M0 0h1.500v9H0zM3.500 0v9l8.500-4.500z"],
  ["Last frame", "M0 0v9l8-4.500zM10 0h2v9h-2z"],
];
const PreviewPanel = () => (
  <section className="mt-[5px] h-[56px] shrink-0 bg-[#232323] text-[11px] text-[#c4c4c4]">
    <div className="flex h-7 items-center gap-[11px] pl-[13px]">Preview<Ham /></div>
    <div className="flex items-center gap-3 pt-[9px] pl-[47px] text-[#b4b4b4]">
      {previewPaths.map(([n, d]) => (
        <Btn key={n} label={n}><Ico w={12} h={9} vb="0 0 12 9"><path d={d} {...solid} /></Ico></Btn>
      ))}
    </div>
  </section>
);

const effects = ["* Animation Presets", "3D Channel", "Audio", "Blur & Sharpen", "Boris FX Mocha", "Channel", "CINEMA 4D", "Color Correction", "Distort", "Expression Controls", "Generate", "Immersive Video", "Keying", "Matte", "Noise & Grain", "Obsolete", "Perspective", "Red Giant", "RG Trapcode", "Simulation", "Stylize", "Text"];

const EffectsPanel = () => (
  <section className="mt-1 flex min-h-0 flex-1 flex-col bg-[#232323]">
    <TabRow className="pr-1 pl-[11px]">
      <Tab className="w-[104px] justify-between">Effects &amp; Presets<Ham /></Tab>
      <Off className="ml-[23px] overflow-hidden border-r border-[#161616]">Librai</Off>
      <span className="mt-2 ml-auto"><More /></span>
    </TabRow>
    <Search label="Search effects" className="mx-[5px] shrink-0" />
    <div className="mt-[3px] flex min-h-0 flex-1 border-t border-black">
      <ul className={`min-w-0 flex-1 overflow-hidden bg-[#262626] text-[12px] text-[#b0b0b0] ${LIST}`}>
        {effects.map((e) => (
          <li key={e} className="h-[17px] border-b border-[#1e1e1e]">
            <button type="button" className="flex h-4 w-full items-center gap-[7px] pt-0.5 pl-[5px] leading-none"><ChevR />{e}</button>
          </li>
        ))}
      </ul>
      <div className="w-4 bg-[#1c1c1c] pt-px pr-px"><div className="h-[326px] rounded-full bg-[#343434]" /></div>
    </div>
    <div className="flex h-[18px] shrink-0 items-center border-t border-black pr-6 text-[#b4b4b4]">
      <Btn label="New preset" className="ml-auto"><Ico w={12} h={12} vb="0 0 12 12"><path d="M0 0h12v12H7V6H0z" {...solid} /><path d="M0 8h5v4z" {...solid} /></Ico></Btn>
    </div>
  </section>
);

/* ---------- timeline ---------- */
const Eye = () => (
  <Ico w={11} h={8} vb="0 0 11 8"><path d="M.6 4C3 .3 8 .3 10.400 4 8 7.700 3 7.700.6 4z" /><circle cx="5.500" cy="4" r="2" {...solid} /></Ico>
);
const Shy = () => (
  <Ico w={12} h={12} vb="0 0 12 12"><path d="M2 6a4 5 0 0 1 8 0zM0 8h12M6 6v6M3 11.500h6" /><path d="M4 4h4M6 2v4" strokeWidth="1" /></Ico>
);
const Sun = () => (
  <Ico w={11} h={11} vb="0 0 11 11"><circle cx="5.500" cy="5.500" r="2" /><path d="M5.500 0v2.500M5.500 8.500V11M0 5.500h2.500M8.500 5.500H11M1.600 1.600l1.800 1.800M7.600 7.600l1.800 1.800M9.400 1.600L7.600 3.400M3.400 7.600L1.600 9.400" strokeWidth="1" /></Ico>
);
const Cube = () => (
  <Ico w={12} h={12} vb="0 0 12 12"><path d="M6 .7l4.800 2.600v5.400L6 11.300 1.200 8.700V3.300zM1.200 3.300L6 6l4.800-2.700M6 6v5.300" strokeWidth="1.100" /></Ico>
);
const Blur = () => (
  <Ico w={14} h={14} vb="0 0 14 14"><circle cx="8.500" cy="5.500" r="4.800" fill="#777" /><path d="M2.500 5.500C.5 8 2 12 6 12.500c2 .3 3.500-.5 4.500-1.500M1 8c0 4 3 5.500 5 5.500" /></Ico>
);
const Film = () => (
  <Ico w={13} h={12} vb="0 0 13 12"><path d="M0 0h13v12H0z" {...solid} /><path d="M2 0v12M11 0v12" stroke="#333" strokeDasharray="1.300 1.300" /><path d="M4.500 6h4" stroke="#333" /></Ico>
);
const VSep = () => <span className="h-3 w-px shrink-0 bg-black" />;
const Slot = ({ className = "", dark = true, children }: { className?: string; dark?: boolean; children?: ReactNode }) => (
  <span className={`flex h-[15px] shrink-0 items-center justify-center ${dark ? "bg-[#242424]" : ""} ${className}`}>{children}</span>
);
const rowSel = "h-[14px] bg-[#1e1e1e] text-[11px] leading-none";

const TimelineHeader = () => (
  <div className="flex h-5 shrink-0 items-center border-y border-black bg-[#333] pl-[5px] text-[10px] text-[#a0a0a0]">
    <Slot dark={false} className="w-3"><Eye /></Slot>
    <Slot dark={false} className="w-[18px]"><Ico w={12} h={11} vb="0 0 12 11"><path d="M0 3.500h2.500L6 .5v10L2.500 7.500H0z" {...solid} /><path d="M7.500 3c1.500 1.500 1.500 3.500 0 5M9.500 1c2.500 2.500 2.500 6.500 0 9" /></Ico></Slot>
    <Slot dark={false} className="w-3"><span className="size-[7px] rounded-full bg-[#b4b4b4]" /></Slot>
    <Slot dark={false} className="w-[18px]"><Ico w={9} h={11} vb="0 0 9 11"><path d="M0 5h9v6H0z" {...solid} /><path d="M2 5V3a2.500 2.500 0 0 1 5 0v2" /><path d="M4.500 6.500v3" stroke="#333" /></Ico></Slot>
    <span className="w-[3px]" /><VSep />
    <Slot dark={false} className="w-[31px] pl-2"><Tag /></Slot><VSep />
    <span className="w-[33px] pl-1.5">#<span className="ml-2.5">.</span></span><VSep />
    <span className="w-[202px] pl-1">Source Name</span><VSep />
    <div className="flex w-[173px] items-center pl-0.5">
      <Slot dark={false} className="w-[15px]"><Shy /></Slot>
      <Slot dark={false} className="w-[15px]"><Sun /></Slot>
      <Slot dark={false} className="w-[15px]"><Ico w={11} h={11} vb="0 0 11 11"><path d="M.5.5l10 10" strokeWidth="1.600" strokeDasharray="4 1.500" /></Ico></Slot>
      <Slot dark={false} className="w-[15px]"><i className="font-['Liberation_Serif',serif] text-[14px] leading-none">fx</i></Slot>
      <Slot dark={false} className="w-[15px]"><Film /></Slot>
      <Slot dark={false} className="w-[15px]"><Blur /></Slot>
      <Slot dark={false} className="w-[15px]"><Ico w={11} h={11} vb="0 0 11 11"><circle cx="5.500" cy="5.500" r="4.800" /><path d="M9 2.200A4.800 4.800 0 0 1 2.200 9z" {...solid} /></Ico></Slot>
      <Slot dark={false} className="w-[15px]"><Cube /></Slot>
    </div><VSep />
    <span className="w-[78px] pl-1">Mode</span>
    <span className="w-[17px]">T</span>
    <span className="w-[69px]">.TrkMat</span><VSep />
    <span className="w-[116px] pl-[5px]">Parent &amp; Link</span><VSep />
  </div>
);

const Layer = ({ n, color, open, icon, name, size, trk }: { n: number; color: string; open: boolean; icon: ReactNode; name: string; size: string; trk: boolean }) => (
  <div className="flex h-[17px] items-center border-b border-[#222] bg-[#333] pl-[5px] text-[#b4b4b4]">
    <Slot className="w-3.5"><Eye /></Slot>
    <Slot className="ml-4 w-[13px]" /><Slot className="ml-0.5 w-[13px]" />
    <span className="flex w-[22px] justify-center pl-1.5 text-[#999]">{open ? <Chev /> : <ChevR />}</span>
    <span className={`ml-px h-[13px] w-3 ${color}`} />
    <span className={`ml-[9px] w-[29px] text-[12px] leading-none font-bold ${LIST}`}>{n}</span>
    <span className="flex w-[14px] shrink-0 justify-center">{icon}</span>
    <span className={`ml-1.5 w-[185px] truncate leading-4 ${size} ${LIST}`}>{name}</span>
    <Slot className="w-[13px]"><Shy /></Slot>
    <Slot className="ml-0.5 w-[13px] text-[#777]"><Sun /></Slot>
    <Slot className="ml-0.5 w-[13px]"><Ico w={11} h={11} vb="0 0 11 11"><path d="M.5 10.500l10-10" strokeWidth="1.500" /></Ico></Slot>
    <Slot className="ml-8 w-[13px]" /><Slot className="ml-0.5 w-[13px]" /><Slot className="ml-0.5 w-[13px]" />
    <Sel label={`Layer ${n} mode`} value="Normal" className={`ml-[55px] w-[69px] ${rowSel}`} sel="pl-[7px]" chev="mr-1" />
    <Slot className="ml-[5px] w-[13px]" />
    {trk ? <Sel label={`Layer ${n} track matte`} value="None" className={`ml-1.5 w-[65px] ${rowSel}`} sel="pl-[7px]" chev="mr-1" /> : <span className="ml-1.5 w-[65px]" />}
    <Btn label="Pick whip" className="ml-2"><Ico w={13} h={11} vb="0 0 13 11"><path d="M6.500 6.500c-1 0-1.500-1.500 0-2s3 .8 2.500 2.500-3 2.800-5 1.500-1.800-4.500 0-6 4.500-1.500 6-.2M12 1c.8 3 .3 6.500-2 8.500" strokeWidth="1" /></Ico></Btn>
    <Sel label={`Layer ${n} parent`} value="None" className={`ml-[7px] w-[89px] ${rowSel}`} sel="pl-[7px]" chev="mr-1.5" />
  </div>
);
const propRow = `flex h-[17px] items-center border-b border-[#1e1e1e] bg-[#262626] text-[12px] leading-none text-[#a0a0a0] ${LIST}`;

const LayerColumns = () => (
  <div className="flex w-[810px] shrink-0 flex-col border-r border-black">
    <div className="flex h-[31px] shrink-0 items-start pl-1.5">
      <div className="w-[98px] text-center">
        <button type="button" className={`block w-full text-[16px] leading-4 font-bold text-[#2d8ceb] ${LIST}`}>0:00:00:00</button>
        <span className={`block text-[11px] leading-3 text-[#1d5a96] ${LIST}`}>00000 (29.97 fps)</span>
      </div>
      <Search label="Search timeline" className="mt-0.5 ml-[5px] w-[499px]" />
      <div className="mt-1 ml-[15px] flex items-center text-[#b4b4b4]">
        <Btn label="Mini flowchart"><Ico w={17} h={14} vb="0 0 17 14"><path d="M1 2h9v9h4M10 6h4M10 2h4" /><path d="M0 0h5v3.500H0zM9 .5h4v3H9zM12 4.500h4v3h-4zM11 9h3v3h-3zM12 10.500h5L14.500 14z" {...solid} /></Ico></Btn>
        <Btn label="Draft 3D" className="ml-4"><Ico w={17} h={17} vb="0 0 17 17"><path d="M11 6l5 2.700v5L11 16.500l-5-2.800v-5zM6 8.700l5 2.800 5-2.800M11 11.500v5M4 0v8M0 4h8M1.200 1.200l5.600 5.600M6.800 1.200L1.200 6.800" /></Ico></Btn>
        <Btn label="Hide shy layers" className="ml-[18px]"><Ico w={16} h={14} vb="0 0 16 14"><path d="M3.500 5.500a4.500 5 0 0 1 9 0zM8 1v7M1 6.500h14" /><path d="M0 8h16v6H0z" fill="#888" stroke="none" /></Ico></Btn>
        <Btn label="Frame blending" className="ml-[11px]"><Ico w={14} h={14} vb="0 0 14 14"><path d="M4 0h10v11H4z" {...solid} /><path d="M5.500 0v11M12.500 0v11" stroke="#232323" strokeDasharray="1.300 1.300" /><path d="M7 5.500h4" stroke="#232323" /><path d="M2.500 2v10.500H12M.6 4v9.500H9" strokeWidth="1" /></Ico></Btn>
        <Btn label="Motion blur" className="ml-3"><Blur /></Btn>
        <Btn label="Graph editor" className="ml-[19px]"><Ico w={16} h={15} vb="0 0 16 15"><path d="M.6 2.600h14.800v11.800H.6zM4 0v3M8 0v3M12 0v3M3 5c4 0 4 7 10 7" /></Ico></Btn>
      </div>
    </div>
    <TimelineHeader />
    <Layer n={1} color="bg-[#b63737]" open={false} trk={false} name="에프터 이펙트" size="text-[14px] font-medium" icon={<span className={`text-[13px] font-bold ${serif}`}>T</span>} />
    <Layer n={2} color="bg-[#6b7de0]" open trk name="Shape Layer 1" size="text-[13px] font-bold" icon={<Ico w={11} h={11} vb="0 0 11 11"><path d="M5.500 0l1.500 3.900 4 .2-3.100 2.600 1 4.100-3.400-2.300-3.400 2.300 1-4.100L0 4.100l4-.2z" {...solid} /></Ico>} />
    <div className={propRow}>
      <span className="ml-[91px] w-[17px]"><Chev /></span>
      <span className="w-[357px] pt-0.5">Contents</span><span className="pt-0.5">Add:</span>
      <Btn label="Add" className="ml-1.5 text-[#c4c4c4]"><Ico w={11} h={11} vb="0 0 11 11"><circle cx="5.500" cy="5.500" r="5.500" {...solid} /><path d="M4 2.500l4 3-4 3z" fill="#222" stroke="none" /></Ico></Btn>
    </div>
    <div className={propRow}>
      <Slot className="ml-[6px] w-3.5 text-[#c4c4c4]"><Eye /></Slot>
      <span className="ml-[89px] w-4"><ChevR /></span>
      <span className="w-[216px] pt-0.5">Rectangle 1</span>
      <Sel label="Blend mode" value="Normal" className={`h-[15px] w-[165px] border border-[#303030] bg-[#1e1e1e] text-[11px] leading-none text-[#b4b4b4] ${UI}`} sel="pl-1.5" chev="mr-1" />
    </div>
    <div className={propRow}>
      <span className="ml-[92px] w-4"><ChevR /></span>
      <span className="w-[234px] pt-0.5">Transform</span>
      <button type="button" className="pt-0.5 text-[#2d8ceb]">Reset</button>
    </div>
    <div className="flex-1" />
  </div>
);

const seconds = Array.from({ length: 21 }, (_, i) => (i === 0 ? ":00s" : `${String(i).padStart(2, "0")}s`));

const Tracks = () => (
  <div className="relative flex min-w-0 flex-1 flex-col">
    <div className="flex h-[11px] shrink-0 border-y border-black">
      <span className="w-[7px] rounded-l-full bg-[#2d8ceb]" /><span className="flex-1 bg-[#686868]" /><span className="w-[7px] rounded-r-full bg-[#2d8ceb]" />
    </div>
    <div className={`mt-[3px] mr-[7px] ml-[7px] flex h-4 justify-between text-[12px] leading-3 text-[#a0a0a0] ${LIST}`}>
      {seconds.map((s, i) => (
        <span key={s} className="flex w-0 flex-col items-center">
          <span className={i === 0 ? "pl-3" : "pr-0.5"}>{s}</span><span className="h-1 w-px shrink-0 bg-[#777]" />
        </span>
      ))}
    </div>
    <div className="flex h-[17px] shrink-0 border-y border-black">
      <span className="mr-px ml-px w-[5px] rounded-l-[4px] bg-[#2d8ceb]" /><span className="flex-1 border-t border-[#7a7a7a] bg-[#5f5f5f]" /><span className="mr-px w-[6px] rounded-r-[4px] bg-[#2d8ceb]" />
    </div>
    <div className="h-1 border-b border-black bg-[#333] pr-[7px] pl-[7px]"><div className="h-full bg-[#14b81c]" /></div>
    <div className="flex flex-1 bg-[#292929] pr-[7px]">
      <div className="flex flex-1 flex-col bg-[#303030]">
        <div className="h-[17px] border-b border-[#1e1e1e] pl-[7px]"><div className="h-full border-t border-b border-t-[#8a4444] border-b-[#5c2626] bg-[#7c3939]" /></div>
        <div className="h-[17px] border-b border-[#1e1e1e] pl-[7px]"><div className="h-full border-t border-b border-t-[#606a9e] border-b-[#3e4778] bg-[#525c8e]" /></div>
        {[0, 1, 2].map((i) => (
          <div key={i} className="flex h-[17px] items-center border-b border-[#1e1e1e] bg-[#343434] pl-[3px] text-[#b4b4b4]">
            <Ico w={8} h={11} vb="0 0 8 11"><path d="M.5.5h7M.5 10.500h7M4 .5v10" strokeWidth="1.300" /></Ico>
          </div>
        ))}
      </div>
    </div>
    <div className="pointer-events-none absolute top-4 bottom-0 left-0 flex w-3.5 flex-col items-center text-[#2d8ceb]">
      <Ico w={13} h={14} vb="0 0 13 14"><path d="M1 0h11v6l-5.500 8L1 6z" {...solid} /></Ico>
      <span className="w-px flex-1 bg-[#2d8ceb]" />
    </div>
  </div>
);

const Timeline = () => (
  <section className="mt-1 mr-px ml-px flex h-[275px] shrink-0 flex-col bg-[#232323]">
    <div className="flex h-8 shrink-0 pl-7 text-[11px]">
      <Off>Render Queue</Off>
      <Tab className="ml-9 w-[94px]">
        <Btn label="Close tab" className="text-[#8c8c8c]"><Ico w={6} h={6} vb="0 0 6 6"><path d="M.5.5l5 5M5.500.5l-5 5" strokeWidth="1" /></Ico></Btn>
        <span className="ml-2 size-2.5 bg-[#ad9a78]" /><span className="ml-2.5 flex-1">Comp 1</span><Ham />
      </Tab>
    </div>
    <div className="flex min-h-0 flex-1 border-b border-black">
      <LayerColumns />
      <Tracks />
      <div className="flex w-[18px] shrink-0 flex-col items-end border-l border-[#1a1a1a] pt-[34px] pr-1 text-[#a0a0a0]">
        <Btn label="Comp marker"><Ico w={11} h={14} vb="0 0 11 14"><path d="M0 0h11v9l-5.500 5L0 9z" {...solid} /></Ico></Btn>
        <Btn label="Comp button" className="mt-[5px]"><Ico w={14} h={13} vb="0 0 14 13"><path d="M7 2h7v8H7z" {...solid} /><path d="M7 0L1 7h4" /><circle cx="6.500" cy="8.500" r="3.200" fill="#232323" /></Ico></Btn>
      </div>
    </div>
    <div className="flex h-[18px] shrink-0 items-center text-[#2d8ceb]">
      <Btn label="Layer switches" className="ml-1 h-4 w-[17px] border border-[#1a1a1a]"><Ico w={11} h={11} vb="0 0 12 12"><path d="M.6 7V.6H7M2.600 9V2.600H9M4.600 4.600h6.800v6.800H4.600zM8 6.500v3M6.500 8h3" /></Ico></Btn>
      <Btn label="Transfer controls" className="ml-px h-4 w-[17px] border border-[#1a1a1a]"><Ico w={12} h={12} vb="0 0 12 12"><circle cx="4.500" cy="4.500" r="3.800" /><path d="M5 5h6.400v6.400H5z" /></Ico></Btn>
      <Btn label="In and out" className="ml-1 text-[#999]"><Ico w={11} h={12} vb="0 0 11 12"><path d="M3.500 0v4.500L1 6l2.500 1.500V12M7.500 0v4.500L10 6 7.500 7.500V12M5.500 0v12" strokeWidth="1.400" /></Ico></Btn>
      <div className="ml-[761px] flex items-center text-[#b4b4b4]">
        <Ico w={10} h={5} vb="0 0 10 5"><path d="M0 5l2.500-3L4 3l2-3 4 5z" {...solid} /></Ico>
        <input type="range" aria-label="Timeline zoom" min={0} max={100} defaultValue={0} className="ml-[10px] h-3 w-12 appearance-none bg-[linear-gradient(#3c3c3c,#3c3c3c)] bg-[length:100%_2px] bg-center bg-no-repeat [&::-webkit-slider-thumb]:size-[11px] [&::-webkit-slider-thumb]:appearance-none [&::-webkit-slider-thumb]:rounded-full [&::-webkit-slider-thumb]:border-2 [&::-webkit-slider-thumb]:border-[#8c8c8c] [&::-webkit-slider-thumb]:bg-[#232323]" />
        <Ico w={16} h={7} vb="0 0 16 7" className="ml-3"><path d="M0 7l4-5h2L3 7zM4 7l6-7 6 7z" {...solid} /></Ico>
      </div>
    </div>
  </section>
);

/* ---------- Windows task bar ---------- */
const TaskApp = ({ label, active = false, line = false, children }: { label: string; active?: boolean; line?: boolean; children: ReactNode }) => (
  <button type="button" aria-label={label} className={`flex h-full w-12 shrink-0 flex-col items-center ${active ? "bg-[#333]" : ""}`}>
    <span className="flex flex-1 items-center pt-0.5">{children}</span>
    <span className={`h-0.5 ${active ? "w-full" : "w-10"} ${line || active ? "bg-[#76b9ed]" : ""}`} />
  </button>
);

const TaskBar = () => (
  <footer className="flex h-10 shrink-0 items-center bg-[#101010] font-['Noto_Sans','Noto_Sans_CJK_KR',sans-serif] text-white">
    <Btn label="Start" className="w-12"><Ico><path d="M0 2.300l6.500-.9v6.100H0zM7.300 1.300L16 0v7.500H7.300zM0 8.500h6.500v6.100L0 13.700zM7.300 8.500H16V16l-8.700-1.300z" {...solid} /></Ico></Btn>
    <label className="flex h-10 w-[344px] shrink-0 items-center gap-2.5 border border-[#606060] bg-[#3e3e3e] pl-3 text-[#dcdcdc]">
      <Ico w={17} h={17} vb="0 0 17 17"><circle cx="10.500" cy="6" r="5" /><path d="M7 9.800L1 16" /></Ico>
      <input aria-label="Windows search" placeholder="검색하려면 여기에 입력하십시오." className="min-w-0 flex-1 bg-transparent text-[16px] outline-none placeholder:text-[#d4d4d4]" />
    </label>
    <div className="ml-0.5 flex h-full gap-px">
      <TaskApp label="Task view"><Ico w={17} h={17} vb="0 0 17 17"><path d="M1 0v3.500h10V0M1 17v-3.500h10V17M1 5.500h10v6H1zM14.500 0v3M14.500 7.500V17" strokeWidth="1.200" /><path d="M13.500 4h2v3h-2z" {...solid} /></Ico></TaskApp>
      <TaskApp label="Edge">
        <Ico w={24} h={24} vb="0 0 24 24">
          <defs>
            <linearGradient id="eg" x1="0" y1="0" x2="1" y2=".6"><stop offset="0" stopColor="#1b9de2" /><stop offset=".5" stopColor="#2bc3d2" /><stop offset="1" stopColor="#5fd24a" /></linearGradient>
            <linearGradient id="eb" x1="0" y1="0" x2="0" y2="1"><stop offset="0" stopColor="#1a86d8" /><stop offset="1" stopColor="#0c59a4" /></linearGradient>
          </defs>
          <path d="M0 12C0 5 5 0 12 0s12 4.500 12 10c0 4-3 6-6.500 6-2.500 0-4-1-4-2s1.500-1.500 1.500-4-2.500-4.500-6-4.500S0 8 0 12z" fill="url(#eg)" stroke="none" />
          <path d="M0 12C0 8 4 5.500 9 5.500c2 0 4 1 5 2.500C10 7 7 10 7 14c0 5 4 8 8 8 3 0 5.500-1.500 7-3-2 3-5.500 5-10 5C5 24 0 19 0 12z" fill="url(#eb)" stroke="none" />
        </Ico>
      </TaskApp>
      <TaskApp label="KakaoTalk">
        <span className="grid h-6 w-6 place-items-center bg-[#fae100]">
          <Ico w={20} h={18} vb="0 0 20 18" className="[grid-area:1/1]"><path d="M10 1c5.500 0 9.500 3.300 9.500 7.300s-4 7.200-9.500 7.200l-1-.1L5.500 18l.7-3.200C2.700 13.600.5 11.200.5 8.300.5 4.300 4.500 1 10 1z" fill="#371d1e" stroke="none" /></Ico>
          <span className="text-[6px] leading-none font-bold text-[#fae100] [grid-area:1/1]">TALK</span>
        </span>
      </TaskApp>
      <TaskApp label="File Explorer" line><Ico w={22} h={19} vb="0 0 22 19"><path d="M0 1.500C0 .7.500 0 1.500 0H8l1.500 2H21v15H0z" fill="#e8a92a" stroke="none" /><path d="M0 4h22v14H0z" fill="#ffd667" stroke="none" /><path d="M3 10h16v9h-4v-4H7v4H3z" fill="#3f94dc" stroke="none" /></Ico></TaskApp>
      <TaskApp label="Microsoft Store"><Ico w={23} h={24} vb="0 0 23 24"><path d="M7 7V1.500h9V7" stroke="#fff" strokeWidth="1.500" /><path d="M0 6h23v16c0 1-.5 2-2 2H2c-1.500 0-2-1-2-2z" fill="#fff" stroke="none" /><path d="M7 10h4v4H7z" fill="#f25022" stroke="none" /><path d="M12 10h4v4h-4z" fill="#7fba00" stroke="none" /><path d="M7 15h4v4H7z" fill="#00a4ef" stroke="none" /><path d="M12 15h4v4h-4z" fill="#ffb900" stroke="none" /></Ico></TaskApp>
      <TaskApp label="Mail"><Ico w={24} h={22} vb="0 0 24 22"><path d="M12 0l12 8H0z" fill="#0f5ea8" stroke="none" /><path d="M0 8h24v14H0z" fill="#1b86dc" stroke="none" /><path d="M0 8h24L12 16z" fill="#f2f9ff" stroke="none" /><path d="M0 8l18 14H0z" fill="#2aa7ee" stroke="none" /></Ico></TaskApp>
      <TaskApp label="Media player"><Ico w={20} h={20} vb="0 0 20 20"><path d="M3 1l17 1v15l-2 2-15-1z" fill="#7fa9c4" stroke="none" /><path d="M0 0h16v19H0z" fill="#a8d0e8" stroke="none" /><circle cx="8.500" cy="9.500" r="6" fill="#f08010" stroke="none" /><path d="M6.500 6l6 3.500-6 3.500z" fill="#fff" stroke="none" /></Ico></TaskApp>
      <TaskApp label="Chrome" line>
        <Ico w={22} h={22} vb="0 0 22 22"><circle cx="11" cy="11" r="11" fill="#fbc116" stroke="none" /><path d="M11 11L1.500 5.500A11 11 0 0 1 20.500 5.500H11z" fill="#e33b2e" stroke="none" /><path d="M1.500 5.500A11 11 0 0 0 10.500 22l5-8.500L11 11 6.500 13.500z" fill="#2da94f" stroke="none" /><circle cx="11" cy="11" r="5.200" fill="#fff" stroke="none" /><circle cx="11" cy="11" r="4.100" fill="#4a8af4" stroke="none" /></Ico>
      </TaskApp>
      <TaskApp label="After Effects" active><AeLogo size="size-[22px] text-[11px]" /></TaskApp>
    </div>
    <button type="button" className="ml-auto flex items-center text-[15px]">
      <Ico w={20} h={20} vb="0 0 20 20"><path d="M14 1c8 5 7 17-3.500 18C6 19 3 17 2 14c7 1 13-4 12-13z" fill="#fcca1e" stroke="none" /><path d="M2.500 7.500a2.500 2.500 0 0 1 .5-4.500 3 3 0 0 1 5 .5 2 2 0 0 1 0 4z" fill="#cfe6f8" stroke="none" /></Ico>
      <span className="ml-2.5 text-[14px]">23°C</span><span className="ml-[9px]">대체로 맑음</span>
    </button>
    <Btn label="Hidden icons" className="ml-[17px]"><Ico w={13} h={8} vb="0 0 13 8"><path d="M.8 7l5.700-5.700L12.200 7" /></Ico></Btn>
    <Btn label="Network" className="ml-2.5"><Ico w={16} h={14} vb="0 0 16 14"><path d="M3.500 1.500h12v8h-12zM9.500 10v3M5.500 13.400h7M2.500 4v9" strokeWidth="1.100" /><path d="M.6.6h3.800v4H.6z" fill="#101010" /></Ico></Btn>
    <Btn label="Volume" className="ml-[7px]"><Ico w={17} h={15} vb="0 0 17 15"><path d="M.6 4.500H3L6 1.500v10L3 8.500H.6z" strokeWidth="1.100" /><circle cx="12" cy="10" r="5" fill="#d42a2a" stroke="none" /><path d="M10 8l4 4M14 8l-4 4" stroke="#fff" /></Ico></Btn>
    <button type="button" className="ml-2 text-[15px]">가</button>
    <button type="button" className="ml-2.5 w-[68px] text-center text-[12px] leading-[18px]"><span className="block">오후 7:46</span><span className="block">2021-09-15</span></button>
    <button type="button" aria-label="Notifications" className="relative ml-[17px] h-7 w-[27px]">
      <Ico w={16} h={16}><path d="M0 0h16v12H8l-4 4v-4H0z" {...solid} /><path d="M3 3.500h10M3 6h10M3 8.500h7" stroke="#101010" /></Ico>
      <span className="absolute right-0 bottom-[-3px] flex size-5 items-center justify-center rounded-full border border-[#777] bg-[#333] text-[11px] font-bold">21</span>
    </button>
    <span className="ml-2.5 h-10 w-px bg-[#555]" />
    <span className="w-1" />
  </footer>
);

export default function App() {
  return (
    <div className="flex h-screen min-w-[1600px] flex-col overflow-hidden bg-[#161616]">
      <TitleBar />
      <MenuBar />
      <ToolBar />
      <main className={`flex min-h-0 flex-1 flex-col pt-0.5 ${UI}`}>
        <div className="flex min-h-0 flex-1 pr-px pl-px">
          <ProjectPanel />
          <CompPanel />
          <div className="ml-1 flex w-[206px] shrink-0 flex-col"><CharacterPanel /><AlignPanel /></div>
          <div className="ml-1 flex w-[206px] shrink-0 flex-col"><InfoPanel /><PreviewPanel /><EffectsPanel /></div>
        </div>
        <Timeline />
      </main>
      <TaskBar />
    </div>
  );
}
